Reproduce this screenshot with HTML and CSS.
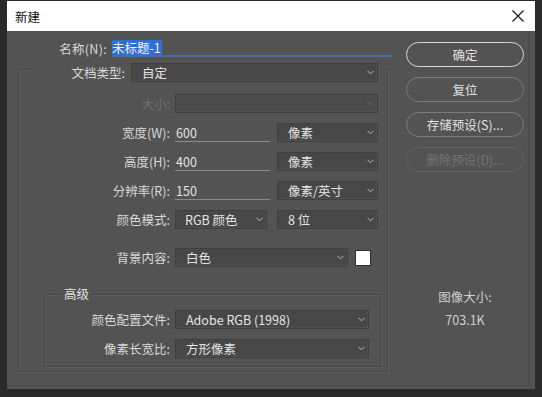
FILE: index.html
```html
<!DOCTYPE html>
<html lang="zh-CN">
<head>
    <meta charset="UTF-8">
    <title>新建</title>
    <link rel="stylesheet" href="styles.css">
</head>
<body>
    <div class="window">
        <!-- Title bar -->
        <div class="titlebar">
            <span class="title">新建</span>
            <svg class="close" width="12" height="12" viewBox="0 0 12 12">
                <path d="M0.5 0.5 L11.5 11.5 M11.5 0.5 L0.5 11.5" stroke="#111" stroke-width="1.1" fill="none"/>
            </svg>
        </div>

        <div class="dialog">
            <!-- Left: form -->
            <div class="form">
                <div class="name-row">
                    <label class="name-label">名称(N):</label>
                    <div class="name-input"><span class="selected">未标题-1</span></div>
                </div>

                <div class="group">
                    <div class="legend">
                        <label class="legend-label">文档类型:</label>
                        <div class="select w-legend">自定<svg class="chev" width="7" height="5" viewBox="0 0 7 5"><polyline points="0.5,0.8 3.5,3.8 6.5,0.8" fill="none" stroke="#bdbdbd" stroke-width="1"/></svg></div>
                    </div>

                    <div class="row first">
                        <label class="lbl disabled">大小:</label>
                        <div class="select w-full disabled"><svg class="chev" width="7" height="5" viewBox="0 0 7 5"><polyline points="0.5,0.8 3.5,3.8 6.5,0.8" fill="none" stroke="#6a6a6a" stroke-width="1"/></svg></div>
                    </div>

                    <div class="row">
                        <label class="lbl">宽度(W):</label>
                        <div class="input">600</div>
                        <div class="select w-unit">像素<svg class="chev" width="7" height="5" viewBox="0 0 7 5"><polyline points="0.5,0.8 3.5,3.8 6.5,0.8" fill="none" stroke="#bdbdbd" stroke-width="1"/></svg></div>
                    </div>

                    <div class="row">
                        <label class="lbl">高度(H):</label>
                        <div class="input">400</div>
                        <div class="select w-unit">像素<svg class="chev" width="7" height="5" viewBox="0 0 7 5"><polyline points="0.5,0.8 3.5,3.8 6.5,0.8" fill="none" stroke="#bdbdbd" stroke-width="1"/></svg></div>
                    </div>

                    <div class="row">
                        <label class="lbl">分辨率(R):</label>
                        <div class="input">150</div>
                        <div class="select w-unit">像素/英寸<svg class="chev" width="7" height="5" viewBox="0 0 7 5"><polyline points="0.5,0.8 3.5,3.8 6.5,0.8" fill="none" stroke="#bdbdbd" stroke-width="1"/></svg></div>
                    </div>

                    <div class="row">
                        <label class="lbl">颜色模式:</label>
                        <div class="select w-mode">RGB 颜色<svg class="chev" width="7" height="5" viewBox="0 0 7 5"><polyline points="0.5,0.8 3.5,3.8 6.5,0.8" fill="none" stroke="#bdbdbd" stroke-width="1"/></svg></div>
                        <div class="select w-unit">8 位<svg class="chev" width="7" height="5" viewBox="0 0 7 5"><polyline points="0.5,0.8 3.5,3.8 6.5,0.8" fill="none" stroke="#bdbdbd" stroke-width="1"/></svg></div>
                    </div>

                    <div class="row bg-row">
                        <label class="lbl">背景内容:</label>
                        <div class="select w-bg">白色<svg class="chev" width="7" height="5" viewBox="0 0 7 5"><polyline points="0.5,0.8 3.5,3.8 6.5,0.8" fill="none" stroke="#bdbdbd" stroke-width="1"/></svg></div>
                        <div class="swatch"></div>
                    </div>

                    <!-- Advanced section -->
                    <div class="subgroup">
                        <div class="sub-legend">高级</div>
                        <div class="row sub-first">
                            <label class="lbl sub-lbl">颜色配置文件:</label>
                            <div class="select w-sub">Adobe RGB (1998)<svg class="chev" width="7" height="5" viewBox="0 0 7 5"><polyline points="0.5,0.8 3.5,3.8 6.5,0.8" fill="none" stroke="#bdbdbd" stroke-width="1"/></svg></div>
                        </div>
                        <div class="row">
                            <label class="lbl sub-lbl">像素长宽比:</label>
                            <div class="select w-sub">方形像素<svg class="chev" width="7" height="5" viewBox="0 0 7 5"><polyline points="0.5,0.8 3.5,3.8 6.5,0.8" fill="none" stroke="#bdbdbd" stroke-width="1"/></svg></div>
                        </div>
                    </div>
                </div>
            </div>

            <!-- Right: buttons -->
            <div class="side">
                <button class="btn primary">确定</button>
                <button class="btn">复位</button>
                <button class="btn">存储预设(S)...</button>
                <button class="btn off">删除预设(D)...</button>

                <div class="info">
                    <div>图像大小:</div>
                    <div class="size">703.1K</div>
                </div>
            </div>
        </div>
    </div>
</body>
</html>
```

FILE: styles.css
```css
/* Page */
body {
    margin: 0;
    background: #2a2a2a;
    font-family: "Noto Sans CJK SC", "Noto Sans", sans-serif;
    font-size: 12.5px;
    color: #d8d8d8;
}

.window {
    margin: 1px 0 0 7px;
    width: 528px;
}

/* Title bar */
.titlebar {
    height: 30px;
    background: #ffffff;
    display: flex;
    align-items: center;
    justify-content: space-between;
    padding: 0 11px 0 8px;
}

.title {
    color: #111;
    font-size: 12.5px;
}

/* Dialog body */
.dialog {
    height: 358px;
    box-sizing: border-box;
    background: #535353;
    display: flex;
    padding: 8px 11px 0 11px;
    box-shadow: inset -6px -3px 0 #535353, inset -7px -4px 0 #4a4a4a;
}

.form {
    width: 374px;
}

/* Name row */
.name-row {
    display: flex;
    height: 18px;
    align-items: center;
}

.name-label {
    width: 89px;
    text-align: right;
    margin-right: 5px;
    letter-spacing: 0.3px;
}

.name-input {
    flex: 1;
    height: 16px;
    border-bottom: 2px solid #4b6e9c;
    display: flex;
    align-items: center;
}

.selected {
    background: #2f6fcf;
    color: #f2f2f2;
    line-height: 15px;
    padding-right: 1px;
}

/* Group boxes */
.group {
    margin: 12px 4px 0 0;
    border: 1px solid #454545;
    box-shadow: inset 1px 1px 0 #5e5e5e, 1px 1px 0 #5e5e5e;
    padding: 0 0 4px 0;
}

.legend {
    display: flex;
    align-items: center;
    height: 19px;
    margin: -7px 5px 0 12px;
    padding-right: 4px;
    background: #535353;
}

.legend-label {
    width: 94px;
    text-align: right;
    margin-right: 6px;
}

.row {
    display: flex;
    align-items: center;
    height: 19px;
    margin-top: 10px;
}

.row.first {
    margin-top: 12px;
}

.row.bg-row {
    margin-top: 19px;
}

.lbl {
    width: 151px;
    text-align: right;
    margin-right: 5px;
    flex-shrink: 0;
}

.lbl.disabled {
    color: #707070;
}

/* Select boxes */
.select {
    height: 19px;
    box-sizing: border-box;
    background: #474747;
    border: 1px solid #3f3f3f;
    box-shadow: inset -1px -1px 0 #4f4f4f;
    color: #e4e4e4;
    display: flex;
    align-items: center;
    justify-content: space-between;
    padding: 0 3px 0 10px;
    flex-shrink: 0;
}

.select.disabled {
    background: #4c4c4c;
    justify-content: flex-end;
}

.chev {
    display: block;
}

.w-legend { width: 247px; }
.w-full { width: 203px; }
.w-unit { width: 101px; margin-left: auto; margin-right: 9px; }
.w-mode { width: 92px; padding-left: 9px; }
.w-bg { width: 173px; }
.w-sub { width: 194px; }

/* Text inputs */
.input {
    width: 95px;
    height: 19px;
    box-sizing: border-box;
    border-bottom: 1px solid #8a8a8a;
    padding-left: 1px;
    color: #e4e4e4;
    display: flex;
    align-items: center;
}

.swatch {
    width: 14px;
    height: 14px;
    background: #ffffff;
    border: 1px solid #2e2e2e;
    margin-left: 7px;
}

/* Advanced sub group */
.subgroup {
    margin: 27px 6px 0 25px;
    border: 1px solid #454545;
    box-shadow: inset 1px 1px 0 #5e5e5e, 1px 1px 0 #5e5e5e;
    padding-bottom: 8px;
}

.sub-legend {
    display: block;
    width: fit-content;
    height: 16px;
    line-height: 16px;
    margin: -9px 0 0 16px;
    padding: 0 3px;
    background: #535353;
    color: #e2e2e2;
}

.row.sub-first {
    margin-top: 8px;
}

.sub-lbl {
    width: 125px;
}

/* Right column */
.side {
    width: 118px;
    margin-left: 14px;
    padding-top: 3px;
    display: flex;
    flex-direction: column;
    gap: 10px;
}

.btn {
    height: 25px;
    border-radius: 13px;
    background: #535353;
    border: 1px solid #7c7c7c;
    color: #e2e2e2;
    font-family: inherit;
    font-size: 12.5px;
    padding: 0;
}

.btn.primary {
    border: 1.5px solid #d6d6d6;
}

.btn.off {
    border-color: #626262;
    color: #737373;
}

.info {
    margin-top: 106px;
    text-align: center;
    color: #cfcfcf;
    line-height: 18px;
}

.size {
    margin-top: 5px;
}
```
